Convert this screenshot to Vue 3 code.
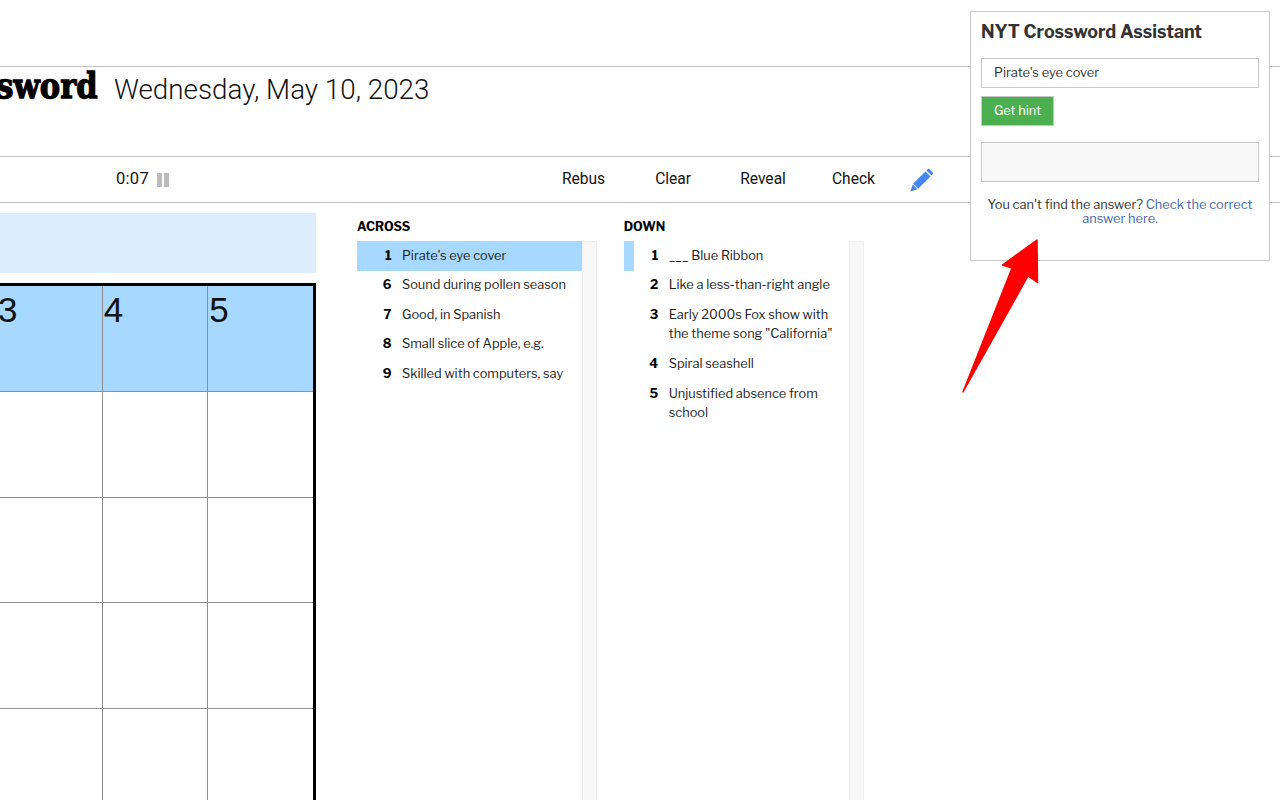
<script setup>
const across = [
  { n: 1, t: "Pirate's eye cover", on: true },
  { n: 6, t: 'Sound during pollen season' },
  { n: 7, t: 'Good, in Spanish' },
  { n: 8, t: 'Small slice of Apple, e.g.' },
  { n: 9, t: 'Skilled with computers, say' },
]
const down = [
  { n: 1, t: '___ Blue Ribbon', strip: true },
  { n: 2, t: 'Like a less-than-right angle' },
  { n: 3, t: 'Early 2000s Fox show with the theme song "California"' },
  { n: 4, t: 'Spiral seashell' },
  { n: 5, t: 'Unjustified absence from school' },
]
const cells = Array.from({ length: 25 }, (_, i) => ({ i, num: i < 5 ? i + 1 : '' }))
</script>

<template>
  <div class="page">
    <div class="topbar"></div>
    <header class="titlebar">
      <div class="title-clip"><span class="title">The Crossword</span></div>
      <div class="date">Wednesday, May 10, 2023</div>
    </header>
    <div class="toolbar">
      <div class="timer">
        <span>0:07</span>
        <span class="pause"><i></i><i></i></span>
      </div>
      <nav class="tools">
        <span class="tool rebus">Rebus</span>
        <span class="tool clear">Clear</span>
        <span class="tool reveal">Reveal</span>
        <span class="tool check">Check</span>
        <svg class="pencil" width="24" height="24" viewBox="0 0 24 24">
          <path fill="#4285f4" d="M19.3 1.1l3.6 3.6c.4.4.4 1 0 1.4l-1.3 1.3-5-5 1.3-1.3c.4-.4 1-.4 1.400 0zM15.500 3.400l5 5L8.300 20.600l-5-5zM2.700 16.600l4.700 4.700L.5 23.500z" />
        </svg>
      </nav>
    </div>
    <main class="main">
      <section class="board">
        <div class="clue-bar"></div>
        <div class="grid-clip">
          <div class="grid">
            <div v-for="c in cells" :key="c.i" class="cell" :class="{ hot: c.i < 5 }">{{ c.num }}</div>
          </div>
        </div>
      </section>
      <section class="clues across">
        <h3>ACROSS</h3>
        <div class="list">
          <ol>
            <li v-for="c in across" :key="c.n" :class="{ on: c.on }">
              <b>{{ c.n }}</b><span>{{ c.t }}</span>
            </li>
          </ol>
          <div class="track"></div>
        </div>
      </section>
      <section class="clues down">
        <h3>DOWN</h3>
        <div class="list">
          <ol>
            <li v-for="c in down" :key="c.n" :class="{ strip: c.strip }">
              <b>{{ c.n }}</b><span>{{ c.t }}</span>
            </li>
          </ol>
          <div class="track"></div>
        </div>
      </section>
    </main>

    <aside class="popup">
      <h2>NYT Crossword Assistant</h2>
      <div class="input">Pirate's eye cover</div>
      <button class="hint">Get hint</button>
      <div class="result"></div>
      <p>You can't find the answer? <a>Check the correct answer here.</a></p>
    </aside>

    <svg class="arrow" width="90" height="165" viewBox="955 235 90 165">
      <path fill="#ff0000" stroke="#ff0000" stroke-width="1.500" stroke-linejoin="round" d="M1037 240 L1002.500 265 L1012 268 L963 392 L1028 276 L1037.500 282.500 Z" />
    </svg>
  </div>
</template>

<style>
html, body { margin: 0; background: #fff; }
</style>

<style scoped>
.page {
  position: relative;
  width: 1280px;
  height: 800px;
  overflow: hidden;
  background: #fff;
  color: #121212;
  font-family: "Libre Franklin", "Liberation Sans", Arial, sans-serif;
}
.topbar { height: 66px; border-bottom: 1px solid #c4c4c4; }
.titlebar {
  height: 89px;
  border-bottom: 1px solid #c4c4c4;
  display: flex;
  align-items: flex-start;
}
.title-clip {
  width: 98px;
  height: 50px;
  overflow: hidden;
  display: flex;
  justify-content: flex-end;
  white-space: nowrap;
  flex: none;
}
.title {
  display: block;
  margin-top: -2px;
  transform: scaleX(.85);
  transform-origin: right center;
  font-family: "DejaVu Serif", serif;
  font-weight: 700;
  font-size: 36px;
  line-height: 40px;
  color: #000;
  -webkit-text-stroke: 1.300px #000;
}
.date {
  margin: 5px 0 0 16px;
  font-family: Roboto, sans-serif;
  font-weight: 300;
  font-size: 27.800px;
  line-height: 36px;
  color: #121212;
}
.toolbar {
  height: 45px;
  border-bottom: 1px solid #c4c4c4;
  display: flex;
  align-items: center;
  font-family: Roboto, sans-serif;
  font-size: 15.600px;
}
.timer { margin-left: 116px; margin-top: -2px; display: flex; align-items: center; gap: 8px; font-size: 16.500px; letter-spacing: .3px; }
.pause { display: flex; gap: 2px; margin-top: 3px; }
.pause i { display: block; width: 5px; height: 14px; background: #bdbdbd; }
.tools { margin-left: auto; display: flex; align-items: center; padding-right: 346px; }
.tool { display: block; margin-top: -2px; }
.clear { margin-left: 50px; }
.reveal { margin-left: 49px; }
.check { margin-left: 46px; }
.pencil { margin-left: 35px; }
.main { display: flex; height: 597px; }
.board { width: 316px; flex: none; padding-top: 10px; }
.clue-bar { height: 60px; background: #dceefe; }
.grid-clip {
  margin-top: 10px;
  width: 316px;
  overflow: hidden;
  display: flex;
  justify-content: flex-end;
}
.grid {
  flex: none;
  display: grid;
  grid-template-columns: repeat(5, 105.700px);
  grid-auto-rows: 105.750px;
  border: 3px solid #000;
}
.cell {
  box-sizing: border-box;
  border-left: 1px solid #8f8f8f;
  border-bottom: 1px solid #8f8f8f;
  font-family: "Liberation Sans", Arial, sans-serif;
  font-size: 35px;
  line-height: 38px;
  padding: 5px 0 0 1px;
  color: #121212;
}
.cell:nth-child(5n + 1) { border-left: 0; }
.cell.hot { background: #a7d8ff; }
.clues { flex: none; width: 240px; }
.across { margin-left: 41px; }
.down { margin-left: 26.700px; }
h3 {
  margin: 0;
  height: 38px;
  padding-top: 15px;
  box-sizing: border-box;
  font-size: 12.500px;
  line-height: 17px;
  font-weight: 700;
  color: #000;
}
.list { display: flex; height: 559px; }
ol { list-style: none; margin: 0; padding: 0; width: 225px; flex: none; }
li {
  display: flex;
  padding: 4.700px 10px 5.300px 0;
  font-size: 12.800px;
  line-height: 19.600px;
  color: #222;
}
li b {
  width: 34.500px;
  flex: none;
  text-align: right;
  margin-right: 10.500px;
  color: #000;
  font-weight: 700;
}
li.on { background: #a7d8ff; }
li.strip { background: linear-gradient(to right, #a7d8ff 10px, #fff 10px); }
.track {
  width: 15px;
  flex: none;
  background: #f8f8f8;
  border: 1px solid #eee;
  border-bottom: 0;
  box-sizing: border-box;
}
.popup {
  position: absolute;
  left: 970px;
  top: 11px;
  width: 300px;
  height: 250px;
  box-sizing: border-box;
  background: #fff;
  border: 1px solid #c8c8c8;
  padding: 10px;
  color: #333;
}
h2 {
  margin: 0;
  font-size: 17.900px;
  line-height: 20px;
  font-weight: 700;
  color: #333;
}
.input {
  margin-top: 16px;
  height: 30px;
  box-sizing: border-box;
  border: 1px solid #c8c8c8;
  padding: 0 12px;
  font-size: 12.900px;
  line-height: 28px;
}
.hint {
  display: block;
  margin-top: 8px;
  width: 73px;
  height: 30px;
  padding: 0 0 2px;
  border: 1px solid #c8c8c8;
  background: #4caf50;
  color: #fff;
  font: inherit;
  font-size: 12.800px;
}
.result {
  margin-top: 16px;
  height: 40px;
  box-sizing: border-box;
  background: #f9f9f9;
  border: 1px solid #c8c8c8;
}
p {
  margin: 16px 0 0;
  text-align: center;
  font-size: 12.800px;
  line-height: 14.400px;
}
a { color: #3f67ad; }
.arrow { position: absolute; left: 955px; top: 235px; }
</style>
